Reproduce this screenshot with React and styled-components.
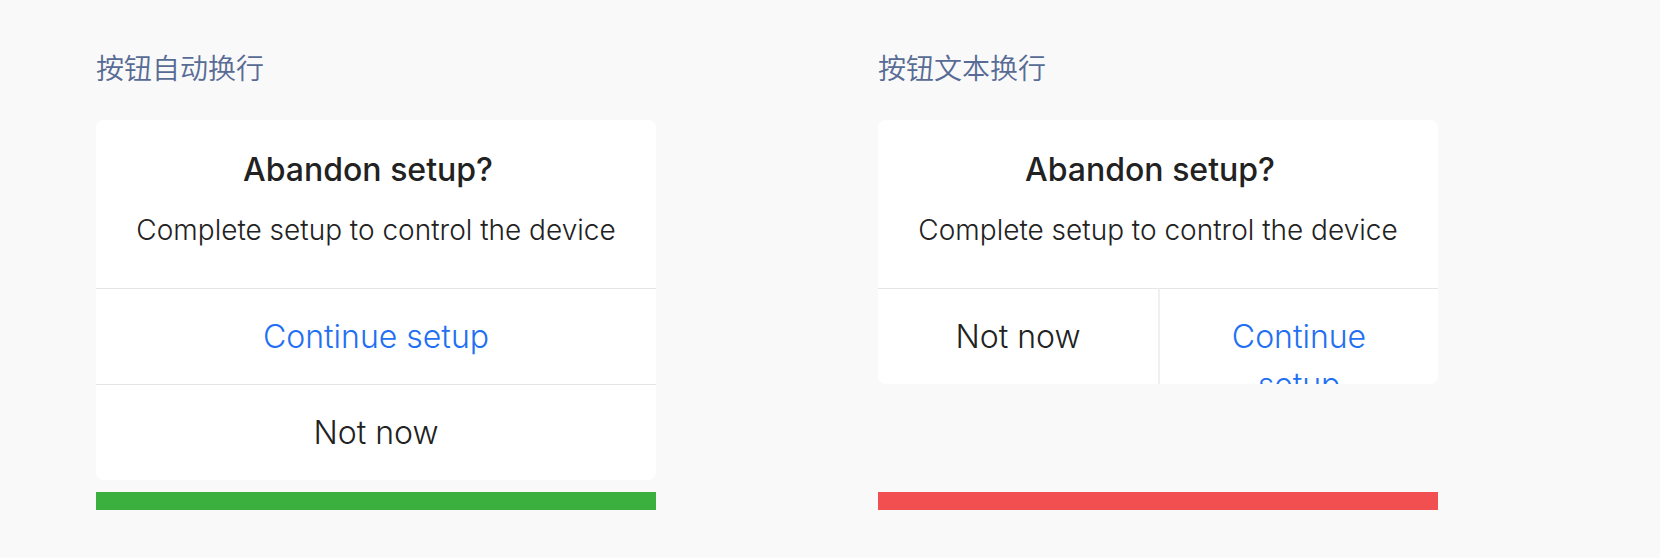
import React from "react";
import styled, { createGlobalStyle } from "styled-components";

const Global = createGlobalStyle`
  *, *::before, *::after { box-sizing: border-box; }
  body { margin: 0; background: #f9f9f9; color: #222; font-family: Inter, "Noto Sans CJK SC", sans-serif; }
`;
const Page = styled.main`
  display: grid;
  grid-template-columns: repeat(2, minmax(0, 560px));
  column-gap: 222px;
  padding: 48px 96px;
`;
const Example = styled.section`
  display: flex;
  flex-direction: column;
`;
const Caption = styled.h2`
  margin: 0 0 30px;
  font-size: 28px;
  line-height: 42px;
  font-weight: 350;
  color: #576b95;
`;
const Stage = styled.div`
  flex: 1;
  min-height: 372px;
`;
const Dialog = styled.div`
  border-radius: 8px;
  background: #fff;
  overflow: hidden;
`;
const Body = styled.div`
  padding: 28px 32px 36px;
  text-align: center;
`;
const Title = styled.h3`
  margin: 0 0 16px;
  padding-right: 16px;
  font-size: 32px;
  line-height: 44px;
  font-weight: 500;
`;
const Message = styled.p`
  margin: 0;
  font-size: 28px;
  line-height: 44px;
  font-weight: 350;
  white-space: nowrap;
`;
const Actions = styled.div`
  display: flex;
  flex-direction: ${(p) => (p.$stacked ? "column" : "row")};
`;
const Action = styled.button`
  flex: ${(p) => (p.$stacked ? "none" : "0 0 50%")};
  height: 96px;
  padding: 24px 64px;
  border: 0 solid #f0f0f0;
  border-top: 1px solid #e5e5e5;
  border-left-width: ${(p) => (p.$divided ? "2px" : "0")};
  background: none;
  color: ${(p) => (p.$primary ? "#226ff2" : "inherit")};
  font: inherit;
  font-size: 32px;
  font-weight: 350;
  line-height: 48px;
  display: flex;
  justify-content: center;
`;
const Verdict = styled.div`
  height: 18px;
  background: ${(p) => (p.$good ? "#3cb03f" : "#f25050")};
`;

function Prompt({ children }) {
  return (
    <Dialog role="dialog" aria-label="Abandon setup?">
      <Body>
        <Title>Abandon setup?</Title>
        <Message>Complete setup to control the device</Message>
      </Body>
      {children}
    </Dialog>
  );
}

export default function App() {
  return (
    <>
      <Global />
      <Page>
        <Example>
          <Caption>按钮自动换行</Caption>
          <Stage>
            <Prompt>
              <Actions $stacked>
                <Action $stacked $primary>Continue setup</Action>
                <Action $stacked>Not now</Action>
              </Actions>
            </Prompt>
          </Stage>
          <Verdict $good />
        </Example>
        <Example>
          <Caption>按钮文本换行</Caption>
          <Stage>
            <Prompt>
              <Actions>
                <Action>Not now</Action>
                <Action $primary $divided>Continue setup</Action>
              </Actions>
            </Prompt>
          </Stage>
          <Verdict />
        </Example>
      </Page>
    </>
  );
}
